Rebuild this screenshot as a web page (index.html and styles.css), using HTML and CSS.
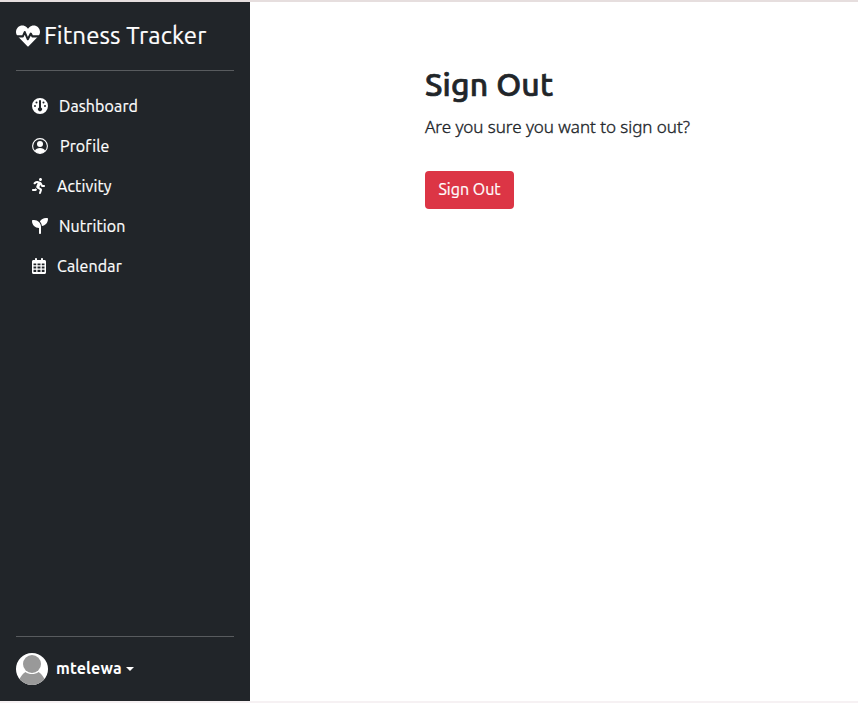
FILE: index.html
```html
<!DOCTYPE html>
<html lang="en">
<head>
<meta charset="utf-8">
<title>Fitness Tracker</title>
<link rel="stylesheet" href="styles.css">
</head>
<body>
<div class="layout">
  <aside class="sidebar">
    <a class="brand">
      <svg class="brand-icon" viewBox="0 0 512 512"><path d="M473.7 73.9l-2.4-2.5c-51.5-52.6-135.8-52.6-187.4 0L256 100l-27.9-28.5c-51.5-52.7-135.9-52.7-187.4 0l-2.4 2.4C-10.4 123.7-12.5 203 31 256l212.1 218.5c7.1 7.3 18.6 7.3 25.7 0L481 256c43.5-53 41.4-132.3-7.3-182.1z"/><path class="pulse" d="M0 264H146L186 172L252 326L316 204L348 264H512"/></svg>
      <span class="brand-name">Fitness Tracker</span>
    </a>
    <hr>
    <nav class="nav">
      <a class="nav-link"><svg class="w16" viewBox="0 0 512 512"><path fill-rule="evenodd" d="M256 0a256 256 0 1 1 0 512a256 256 0 1 1 0-512zM224 96V302a64 64 0 1 0 64 0V96a32 32 0 0 0-64 0zM144 112a32 32 0 1 0 0 64a32 32 0 1 0 0-64zM368 112a32 32 0 1 0 0 64a32 32 0 1 0 0-64zM96 224a32 32 0 1 0 0 64a32 32 0 1 0 0-64zM416 224a32 32 0 1 0 0 64a32 32 0 1 0 0-64z"/></svg><span>Dashboard</span></a>
      <a class="nav-link wide"><svg class="w16" viewBox="0 0 16 16"><circle cx="8" cy="8" r="7.4" fill="none" stroke="#fff" stroke-width="1.1"/><circle cx="8" cy="6" r="3"/><path d="M2.8 12.9C3.8 10.8 5.5 10 8 10s4.2.8 5.2 2.9A7.2 7.2 0 0 1 8 15.2a7.2 7.2 0 0 1-5.2-2.3z"/></svg><span>Profile</span></a>
      <a class="nav-link wide"><svg class="w13" viewBox="0 0 416 512"><path d="M272 96c26.51 0 48-21.49 48-48S298.51 0 272 0s-48 21.49-48 48 21.49 48 48 48zM113.69 317.47l-14.8 34.52H32c-17.67 0-32 14.33-32 32s14.33 32 32 32h77.45c19.25 0 36.58-11.44 44.11-29.09l8.79-20.52-10.67-6.3c-17.32-10.23-30.06-25.37-37.99-42.61zM384 223.99h-44.03l-26.06-53.25c-12.5-25.55-35.45-44.23-61.78-50.94l-71.08-21.14c-28.3-6.8-57.77-.55-80.84 17.14l-39.67 30.41c-14.03 10.75-16.69 30.83-5.92 44.86s30.84 16.66 44.86 5.92l39.69-30.41c7.67-5.89 17.44-8 25.27-6.14l14.7 4.37-37.46 87.39c-12.62 29.48-1.31 64.01 26.3 80.31l84.98 50.17-27.47 87.73c-5.28 16.86 4.11 34.82 20.97 40.09 3.19 1 6.41 1.48 9.58 1.48 13.61 0 26.23-8.77 30.52-22.45l31.64-101.06c5.91-20.77-2.89-43.08-21.64-54.39l-61.24-36.14 31.31-78.28 20.27 41.43c8 16.34 24.92 26.89 43.11 26.89H384c17.67 0 32-14.33 32-32s-14.33-31.99-32-31.99z"/></svg><span>Activity</span></a>
      <a class="nav-link"><svg class="w16" viewBox="0 0 512 512"><path d="M512 32c0 113.6-84.6 207.5-194.2 222c-7.1-53.4-30.6-101.6-65.3-139.3C290.8 46.3 364 0 448 0h32c17.7 0 32 14.3 32 32zM0 96C0 78.3 14.3 64 32 64H64c123.7 0 224 100.3 224 224v32V480c0 17.7-14.3 32-32 32s-32-14.3-32-32V320C100.3 320 0 219.7 0 96z"/></svg><span>Nutrition</span></a>
      <a class="nav-link"><svg class="w14" viewBox="0 0 448 512"><path fill-rule="evenodd" d="M128 0c17.7 0 32 14.3 32 32V64H288V32c0-17.7 14.3-32 32-32s32 14.3 32 32V64h48c26.5 0 48 21.5 48 48V464c0 26.5-21.5 48-48 48H48c-26.5 0-48-21.5-48-48V112C0 85.5 21.5 64 48 64H96V32c0-17.7 14.3-32 32-32zM48 176v56h88v-56zM176 176v56h96v-56zM312 176v56h88v-56zM48 272v64h88v-64zM176 272v64h96v-64zM312 272v64h88v-64zM48 376v72h88v-72zM176 376v72h96v-72zM312 376v72h88v-72z"/></svg><span>Calendar</span></a>
    </nav>
    <hr>
    <a class="user">
      <svg class="avatar" viewBox="0 0 32 32"><defs><clipPath id="round"><circle cx="16" cy="16" r="16"/></clipPath></defs><g clip-path="url(#round)"><path fill="#fff" d="M0 0h32v32H0z"/><path fill="#999" d="M3 27C5 23 7 20.5 9.5 19c3.5 2.8 9.5 2.8 13 0C25 20.5 27 23 29 27v6H3z"/><circle cx="16" cy="11" r="9" fill="#999"/></g></svg>
      <strong class="user-name">mtelewa</strong><span class="caret"></span>
    </a>
  </aside>
  <main class="content">
    <h2>Sign Out</h2>
    <p>Are you sure you want to sign out?</p>
    <button class="btn" type="button">Sign Out</button>
  </main>
</div>
</body>
</html>
```
FILE: styles.css
```css
* { box-sizing: border-box; }
body {
  margin: 0;
  font: 16px/24px Ubuntu, "Noto Sans", sans-serif;
  color: #212529;
  background: #fff;
}
.layout {
  display: flex;
  height: 703px;
  border-top: 2px solid #e6dede;
  border-bottom: 2px solid #f6f1f3;
}
.sidebar {
  display: flex;
  flex-direction: column;
  width: 250px;
  padding: 16px;
  color: #fff;
  background: #212529;
}
svg { display: block; flex: none; fill: #fff; }
.brand { display: flex; align-items: center; gap: 4px; height: 36px; font-size: 24px; line-height: 36px; }
.brand-icon { width: 24px; height: 24px; }
.pulse { fill: none; stroke: #212529; stroke-width: 44; stroke-linejoin: round; }
.brand-name { letter-spacing: 0.14px; -webkit-text-stroke: 0.2px; }
hr { width: 100%; height: 1px; margin: 16px 0; border: 0; background: #585b5e; }
.nav { flex: 1; margin-top: -1px; }
.nav-link { display: flex; align-items: center; gap: 11px; height: 40px; padding: 0 16px; letter-spacing: 0.12px; -webkit-text-stroke: 0.2px; }
.nav-link.wide { gap: 12px; }
.w16 { width: 16px; height: 16px; }
.w13 { width: 13px; height: 16px; }
.w14 { width: 14px; height: 16px; }
.user { display: flex; align-items: center; height: 32px; }
.user-name { margin-top: -2px; letter-spacing: 0.15px; }
.avatar { width: 32px; height: 32px; margin-right: 8px; }
.caret { margin-left: 4px; border: 4.8px solid transparent; border-top-color: #fff; border-bottom: 0; }
.content { padding: 63px 0 0 175px; }
h2 { margin: 0 0 9px; font-size: 32px; font-weight: 500; line-height: 38px; letter-spacing: 0.2px; -webkit-text-stroke: 0.7px; }
p { height: 27px; margin: 0 0 32px; font-family: "Noto Sans", sans-serif; font-size: 17px; font-weight: 300; line-height: 29px; letter-spacing: -0.03px; -webkit-text-stroke: 0.35px; }
.btn {
  height: 38px;
  width: 89px;
  padding: 0 0 2px;
  border: 0;
  border-radius: 4px;
  font: inherit;
  color: #fff;
  background: #dc3545;
  -webkit-text-stroke: 0.2px;
}
```
